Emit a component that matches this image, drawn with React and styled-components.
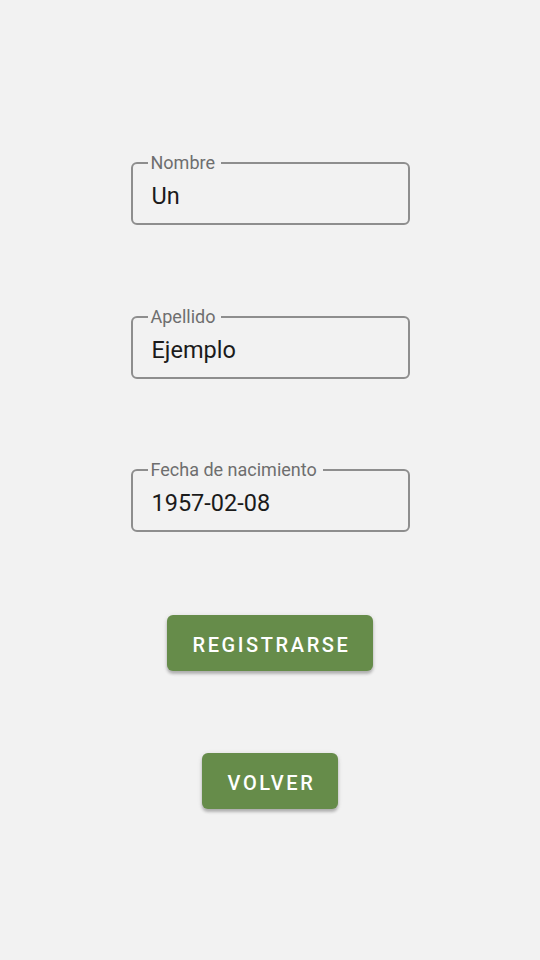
import React from "react";
import styled, { createGlobalStyle } from "styled-components";

const Global = createGlobalStyle`
  html, body { margin: 0; padding: 0; background: #f2f2f2; }
  body { font-family: Roboto, "Noto Sans", sans-serif; }
`;

const Page = styled.main`
  min-height: 960px;
  box-sizing: border-box;
  padding-top: 154px;
  display: flex;
  flex-direction: column;
  align-items: center;
  gap: 82.5px;
  background: #f2f2f2;
`;

const Field = styled.fieldset`
  margin: 0;
  box-sizing: border-box;
  width: 279px;
  padding: 0 14px 4px 19px;
  border: 2px solid #8e8e8e;
  border-radius: 6px;
  min-inline-size: 0;
`;

const Legend = styled.legend`
  padding: 0 6px 0 3px;
  margin-left: -4px;
  font-size: 18px;
  line-height: 18px;
  color: #6e6e6e;
  font-family: Roboto, sans-serif;
`;

const Value = styled.div`
  height: 47px;
  line-height: 49px;
  font-size: 23.5px;
  color: #1b1b1b;
`;

const Button = styled.button`
  box-sizing: border-box;
  height: 56px;
  padding: 4px 23px 0 26px;
  border: none;
  border-radius: 6px;
  background: #668c4a;
  color: #ffffff;
  font-family: Roboto, sans-serif;
  font-weight: 500;
  font-size: 20px;
  letter-spacing: 2.6px;
  text-transform: uppercase;
  box-shadow: 0 3px 3px rgba(0, 0, 0, 0.22), 0 1px 5px rgba(0, 0, 0, 0.12);
  cursor: pointer;
`;

function TextField({ label, value }) {
  return (
    <Field>
      <Legend>{label}</Legend>
      <Value>{value}</Value>
    </Field>
  );
}

export default function App() {
  return (
    <>
      <Global />
      <Page>
        <TextField label="Nombre" value="Un" />
        <TextField label="Apellido" value="Ejemplo" />
        <TextField label="Fecha de nacimiento" value="1957-02-08" />
        <Button>Registrarse</Button>
        <Button>Volver</Button>
      </Page>
    </>
  );
}
